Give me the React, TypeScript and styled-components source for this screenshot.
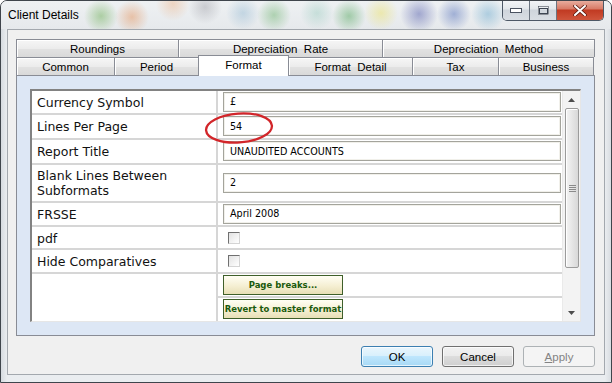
import React from 'react';
import styled, { createGlobalStyle } from 'styled-components';

const GlobalStyle = createGlobalStyle`
  html, body {
    margin: 0;
    padding: 0;
    background: #ffffff;
  }

  body {
    width: 612px;
    height: 383px;
    overflow: hidden;
  }
`;

const Window = styled.div`
  position: relative;
  box-sizing: border-box;
  width: 612px;
  height: 383px;

  display: flex;
  flex-direction: column;

  border: 1px solid #3f454c;
  border-radius: 7px 7px 0 0;
  background: linear-gradient(to right, #d6dbe0 0, #eaedf0 6px, #eaedf0 calc(100% - 6px), #d8dce1 100%);
  font-family: 'Liberation Sans', Arial, sans-serif;
  color: #000;
  overflow: hidden;
`;

const blob = (x: number, y: number, c: string, r = 17) =>
  `radial-gradient(circle at ${x}px ${y}px, rgba(${c}) 0, rgba(${c.replace(/[\d.]+$/, '0')}) ${r}px)`;

const TitleBar = styled.div`
  display: flex;
  align-items: flex-start;
  height: 28px;
  padding-left: 7px;

  background:
    ${blob(100, 15, '96, 168, 70, 0.45')},
    ${blob(131, 16, '228, 140, 80, 0.45')},
    ${blob(172, 3, '236, 170, 120, 0.4')},
    ${blob(204, 6, '120, 120, 130, 0.3')},
    ${blob(242, 12, '90, 150, 190, 0.28')},
    ${blob(273, 14, '90, 170, 90, 0.42')},
    ${blob(316, 12, '120, 190, 170, 0.32')},
    ${blob(348, 15, '70, 160, 80, 0.45')},
    ${blob(380, 12, '236, 226, 110, 0.5')},
    ${blob(418, 13, '80, 90, 170, 0.48', 19)},
    ${blob(453, 13, '70, 100, 180, 0.45')},
    ${blob(487, 13, '90, 160, 200, 0.42')},
    linear-gradient(#eef1f3, #e6e9ec);
`;

const Title = styled.span`
  margin-top: 7px;
  font-size: 12px;
  color: #000;
`;

const Controls = styled.div`
  display: flex;
  margin-left: auto;
  margin-right: 7px;
  margin-top: -1px;
  height: 20px;
  border: 1px solid #4d5866;
  border-top: none;
  border-radius: 0 0 5px 5px;
  overflow: hidden;
`;

const CtrlButton = styled.div<{ $w: number; $close?: boolean }>`
  display: flex;
  align-items: center;
  justify-content: center;
  width: ${(p) => p.$w}px;
  height: 100%;
  background: ${(p) =>
    p.$close
      ? 'linear-gradient(#eab2a4 0, #d77a66 45%, #c13a22 50%, #cf553c 100%)'
      : 'linear-gradient(#f4f6f8 0, #e3e7eb 45%, #cfd5dc 50%, #d9dee4 100%)'};
  & + & {
    border-left: 1px solid #6b7480;
  }
`;

const Client = styled.div`
  flex: 1;
  display: flex;
  flex-direction: column;
  margin: 0 6px 7px 6px;
  padding: 9px 9px 0 8px;
  border: 1px solid #a3a8ae;
  background: #f0f0f0;
`;

const TabRow = styled.div`
  display: flex;
  height: 18px;
`;

const Tab = styled.div<{ $w: number; $active?: boolean }>`
  box-sizing: border-box;
  display: flex;
  align-items: center;
  justify-content: center;
  width: ${(p) => p.$w}px;
  height: ${(p) => (p.$active ? 21 : 18)}px;
  margin-top: ${(p) => (p.$active ? -2 : 0)}px;
  padding-bottom: ${(p) => (p.$active ? 3 : 0)}px;
  position: relative;
  z-index: ${(p) => (p.$active ? 2 : 1)};

  border-top: 1px solid #898c95;
  border-left: 1px solid #898c95;
  &:last-child {
    border-right: 1px solid #898c95;
  }
  ${(p) => p.$active && 'border-right: 1px solid #898c95; margin-right: -1px;'}

  background: ${(p) =>
    p.$active ? '#ffffff' : 'linear-gradient(#f6f6f6 0, #ececec 50%, #e2e2e2 51%, #d9d9d9 100%)'};
  box-shadow: ${(p) => (p.$active ? 'none' : 'inset 1px 1px 0 #ffffff')};

  font-size: 11.5px;
  white-space: pre;
`;

const Panel = styled.div`
  box-sizing: border-box;
  height: 261px;
  padding: 13px;
  border: 1px solid #898c95;
  background: #dde7f5;
`;

const Grid = styled.div`
  display: flex;
  height: 100%;
  box-sizing: border-box;
  border-top: 2px solid #828282;
  border-left: 2px solid #828282;
  border-right: 1px solid #e6e6e6;
  border-bottom: 1px solid #e6e6e6;
  background: #ffffff;
`;

const Rows = styled.div`
  flex: 1;
  display: flex;
  flex-direction: column;
`;

const Row = styled.div<{ $h: number }>`
  display: grid;
  grid-template-columns: 186px 1fr;
  height: ${(p) => p.$h}px;
  border-bottom: 2px solid #d6d6d6;

  &:last-child {
    border-bottom: none;
  }
`;

const Label = styled.div`
  display: flex;
  align-items: center;
  padding-left: 5px;
  padding-top: 1px;
  border-right: 2px solid #d6d6d6;
  font-family: 'DejaVu Sans', Verdana, sans-serif;
  font-size: 12.5px;
  line-height: 15px;
  color: #111;
`;

const Value = styled.div`
  display: flex;
  align-items: center;
  padding-left: 5px;
  padding-right: 1px;
`;

const ButtonStack = styled.div`
  display: flex;
  flex-direction: column;
`;

const StackCell = styled.div<{ $h: number }>`
  display: flex;
  align-items: center;
  height: ${(p) => p.$h}px;
  padding-left: 5px;

  & + & {
    border-top: 2px solid #d6d6d6;
  }
`;

const Field = styled.div`
  box-sizing: border-box;
  flex: 1;
  height: 20px;
  display: flex;
  align-items: center;
  padding-left: 6px;
  border: 1px solid #a4a49c;
  box-shadow: inset 0 0 0 1px #f1f0ea;
  background: #ffffff;
  font-family: 'DejaVu Sans', Verdana, sans-serif;
  font-size: 9.6px;
  color: #000;
`;

const Check = styled.div`
  box-sizing: border-box;
  width: 12px;
  height: 12px;
  margin-left: 5px;
  border-top: 1px solid #707070;
  border-left: 1px solid #707070;
  border-right: 1px solid #d4d4d4;
  border-bottom: 1px solid #d4d4d4;
  background: linear-gradient(135deg, #e2e2e2, #ffffff);
`;

const ActionButton = styled.div`
  box-sizing: border-box;
  width: 120px;
  height: 20px;
  display: flex;
  align-items: center;
  justify-content: center;
  border: 1px solid #3f5f2a;
  background: linear-gradient(#fffef4 0, #f5efd3 55%, #e8dfb6 100%);
  font-family: 'DejaVu Sans', Verdana, sans-serif;
  font-weight: bold;
  font-size: 8.5px;
  color: #1b5a0c;
  white-space: nowrap;
`;

const ScrollBar = styled.div`
  width: 17px;
  display: flex;
  flex-direction: column;
  background: #f3f3f3;
  border-left: 1px solid #eaeaea;
`;

const ArrowBox = styled.div`
  height: 17px;
  display: flex;
  align-items: center;
  justify-content: center;
`;

const Thumb = styled.div`
  box-sizing: border-box;
  height: 160px;
  margin: 0 1px 0 2px;
  display: flex;
  align-items: center;
  justify-content: center;
  border: 1px solid #9b9b9b;
  border-radius: 2px;
  background: linear-gradient(to right, #f4f4f4, #e6e6e6 50%, #d8d8d8);
  box-shadow: inset 1px 1px 0 #ffffff;
`;

const Track = styled.div`
  flex: 1;
`;

const Footer = styled.div`
  display: flex;
  justify-content: flex-end;
  gap: 9px;
  padding: 10px 0 0 0;
`;

const DialogButton = styled.div<{ $variant?: 'default' | 'disabled' }>`
  box-sizing: border-box;
  width: 72px;
  height: 21px;
  display: flex;
  align-items: center;
  justify-content: center;
  border-radius: 3px;
  font-size: 11.5px;
  border: 1px solid
    ${(p) => (p.$variant === 'default' ? '#3c7fb1' : p.$variant === 'disabled' ? '#adb2b5' : '#707070')};
  background: ${(p) =>
    p.$variant === 'default'
      ? 'linear-gradient(#eaf6fd 0, #d9f0fc 45%, #bee6fd 50%, #a7d9f5 100%)'
      : p.$variant === 'disabled'
        ? '#f4f4f4'
        : 'linear-gradient(#f2f2f2 0, #ebebeb 45%, #dddddd 50%, #cfcfcf 100%)'};
  box-shadow: ${(p) => (p.$variant === 'disabled' ? 'none' : 'inset 0 0 0 1px rgba(255,255,255,0.7)')};
  color: ${(p) => (p.$variant === 'disabled' ? '#838383' : '#000')};
`;

const Mnemonic = styled.span`
  text-decoration: underline;
`;

const Annotation = styled.svg`
  position: absolute;
  left: 201px;
  top: 108px;
  pointer-events: none;
`;

const rows = [
  { label: 'Currency Symbol', h: 22, kind: 'field', value: '£' },
  { label: 'Lines Per Page', h: 24, kind: 'field', value: '54' },
  { label: 'Report Title', h: 23, kind: 'field', value: 'UNAUDITED ACCOUNTS' },
  { label: 'Blank Lines Between Subformats', h: 37, kind: 'field', value: '2' },
  { label: 'FRSSE', h: 22, kind: 'field', value: 'April 2008' },
  { label: 'pdf', h: 22, kind: 'check', value: '' },
  { label: 'Hide Comparatives', h: 22, kind: 'check', value: '' },
];

const actions = [
  { text: 'Page breaks...', h: 22 },
  { text: 'Revert to master format', h: 23 },
];

function TriangleUp() {
  return (
    <svg width="7" height="4" viewBox="0 0 7 4">
      <path d="M0 4 L3.5 0 L7 4 Z" fill="#4d4d4d" />
    </svg>
  );
}

function TriangleDown() {
  return (
    <svg width="7" height="4" viewBox="0 0 7 4">
      <path d="M0 0 L7 0 L3.5 4 Z" fill="#4d4d4d" />
    </svg>
  );
}

function App() {
  return (
    <>
      <GlobalStyle />
      <Window>
        <TitleBar>
          <Title>Client Details</Title>
          <Controls>
            <CtrlButton $w={26}>
              <svg width="12" height="5" viewBox="0 0 12 5">
                <rect x="0.5" y="0.5" width="11" height="4" fill="#ffffff" stroke="#4a5260" />
              </svg>
            </CtrlButton>
            <CtrlButton $w={26}>
              <svg width="11" height="9" viewBox="0 0 11 9">
                <rect x="0.5" y="0.5" width="10" height="8" fill="none" stroke="#ffffff" strokeWidth="1.4" />
                <rect x="1.5" y="2.5" width="8" height="5" fill="none" stroke="#3d4552" />
                <rect x="0.5" y="0.5" width="10" height="8" fill="none" stroke="#3d4552" strokeWidth="0.6" />
              </svg>
            </CtrlButton>
            <CtrlButton $w={46} $close>
              <svg width="14" height="11" viewBox="0 0 14 11">
                <path d="M2 1 L12 10 M12 1 L2 10" stroke="#5a1a10" strokeWidth="3.6" strokeLinecap="round" />
                <path d="M2 1 L12 10 M12 1 L2 10" stroke="#ffffff" strokeWidth="2" strokeLinecap="round" />
              </svg>
            </CtrlButton>
          </Controls>
        </TitleBar>

        <Client>
          <TabRow>
            <Tab $w={162}>Roundings</Tab>
            <Tab $w={204}>{'Depreciation  Rate'}</Tab>
            <Tab $w={213}>{'Depreciation  Method'}</Tab>
          </TabRow>
          <TabRow>
            <Tab $w={98}>Common</Tab>
            <Tab $w={84}>Period</Tab>
            <Tab $w={91} $active>Format</Tab>
            <Tab $w={124}>{'Format  Detail'}</Tab>
            <Tab $w={86}>Tax</Tab>
            <Tab $w={96}>Business</Tab>
          </TabRow>

          <Panel>
            <Grid>
              <Rows>
                {rows.map((r, i) => (
                  <Row key={i} $h={r.h}>
                    <Label>{r.label}</Label>
                    <Value>
                      {r.kind === 'field' && <Field>{r.value}</Field>}
                      {r.kind === 'check' && <Check />}
                    </Value>
                  </Row>
                ))}
                <Row $h={47}>
                  <Label />
                  <ButtonStack>
                    {actions.map((a) => (
                      <StackCell key={a.text} $h={a.h}>
                        <ActionButton>{a.text}</ActionButton>
                      </StackCell>
                    ))}
                  </ButtonStack>
                </Row>
              </Rows>
              <ScrollBar>
                <ArrowBox>
                  <TriangleUp />
                </ArrowBox>
                <Thumb>
                  <svg width="7" height="7" viewBox="0 0 7 7">
                    <path d="M0 0.5 H7 M0 2.5 H7 M0 4.5 H7 M0 6.5 H7" stroke="#8a8a8a" strokeWidth="1" />
                  </svg>
                </Thumb>
                <Track />
                <ArrowBox>
                  <TriangleDown />
                </ArrowBox>
              </ScrollBar>
            </Grid>
          </Panel>

          <Footer>
            <DialogButton $variant="default">OK</DialogButton>
            <DialogButton>Cancel</DialogButton>
            <DialogButton $variant="disabled">
              <Mnemonic>A</Mnemonic>pply
            </DialogButton>
          </Footer>
        </Client>

        <Annotation width="74" height="38" viewBox="0 0 74 38">
          <ellipse
            cx="37"
            cy="19"
            rx="33"
            ry="14.5"
            fill="none"
            stroke="#d2262a"
            strokeWidth="2.3"
            transform="rotate(-4 37 19)"
          />
        </Annotation>
      </Window>
    </>
  );
}

export default App;
